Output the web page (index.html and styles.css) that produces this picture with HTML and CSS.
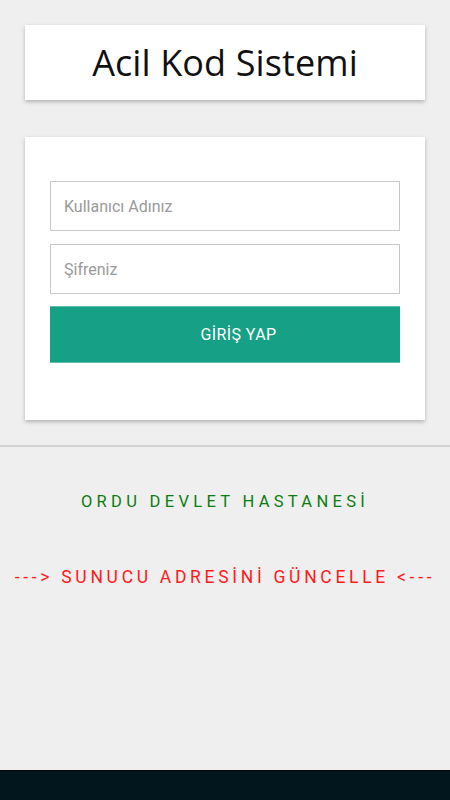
FILE: index.html
```html
<!DOCTYPE html>
<html lang="tr">
<head>
<meta charset="utf-8">
<link rel="stylesheet" href="styles.css">
</head>
<body>
<div class="page">
  <div class="title-card"><h1>Acil Kod Sistemi</h1></div>
  <div class="form-card">
    <div class="field">Kullanıcı Adınız</div>
    <div class="field">Şifreniz</div>
    <div class="btn">GİRİŞ YAP</div>
  </div>
  <hr class="divider">
  <div class="hospital">ORDU DEVLET HASTANESİ</div>
  <div class="update">---&gt; SUNUCU ADRESİNİ GÜNCELLE &lt;---</div>
</div>
<div class="navbar"></div>
</body>
</html>
```
FILE: styles.css
```css
html, body { margin: 0; padding: 0; }
body {
  background: #efefef;
  width: 450px;
  height: 800px;
  overflow: hidden;
  display: flex;
  flex-direction: column;
  font-family: Roboto, "Noto Sans", sans-serif;
}
.page {
  flex: 1;
  display: flex;
  flex-direction: column;
  padding-top: 25px;
}
.title-card {
  margin: 0 25px;
  height: 75px;
  background: #fff;
  box-shadow: 0 2px 4px rgba(0,0,0,0.25);
  display: flex;
  align-items: center;
  justify-content: center;
}
.title-card h1 {
  margin: 0;
  font-family: "Open Sans", sans-serif;
  font-weight: 400;
  font-size: 36px;
  color: #111;
  letter-spacing: 0.1px;
}
.form-card {
  margin: 37px 25px 0;
  height: 283px;
  box-sizing: border-box;
  background: #fff;
  box-shadow: 0 2px 4px rgba(0,0,0,0.25);
  padding: 44px 25px 0;
  display: flex;
  flex-direction: column;
}
.field {
  height: 50px;
  box-sizing: border-box;
  border: 1.5px solid #c9c9c9;
  padding-left: 13px;
  display: flex;
  align-items: center;
  font-size: 16px;
  color: #9a9a9a;
  margin-bottom: 13px;
}
.btn {
  height: 57px;
  background: #16a085;
  border-top: 1px solid #5fbfa9;
  border-bottom: 1px solid #5fbfa9;
  box-sizing: border-box;
  display: flex;
  align-items: center;
  justify-content: center;
  padding-left: 27px;
  color: #fff;
  font-size: 16px;
  letter-spacing: 0.4px;
  margin-top: -1px;
}
.divider {
  margin: 25px 0 0;
  border: 0;
  height: 1.5px;
  background: #d2d2d2;
}
.hospital {
  margin-top: 45px;
  text-align: center;
  color: #0b7d10;
  font-size: 16.5px;
  letter-spacing: 4.3px;
  padding-left: 0;
}
.update {
  margin-top: 56px;
  text-align: center;
  color: #ff1a1a;
  font-size: 17.5px;
  letter-spacing: 3.7px;
  white-space: nowrap;
}
.navbar {
  height: 30px;
  background: #02161d;
  border-top: 1px solid #000;
  box-sizing: border-box;
}
```
